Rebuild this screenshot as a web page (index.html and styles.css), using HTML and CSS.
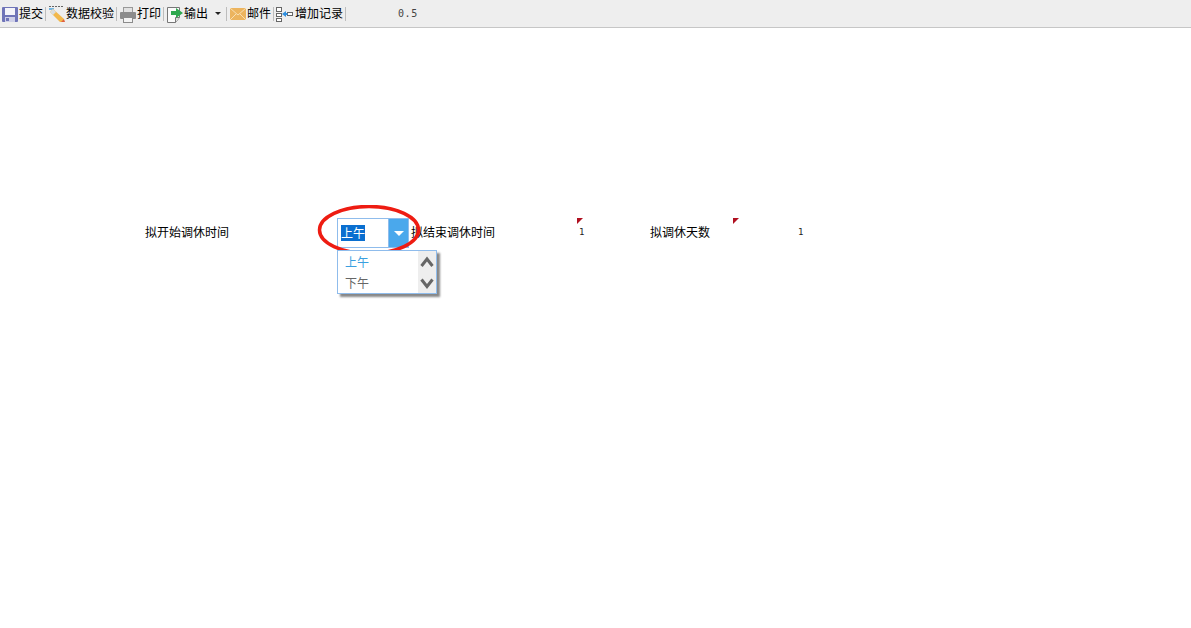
FILE: index.html
```html
<!DOCTYPE html>
<html lang="zh">
<head>
<meta charset="utf-8">
<title>调休申请</title>
<link rel="stylesheet" href="styles.css">
</head>
<body>
<div class="toolbar">
  <div class="tool">
    <svg class="icon" width="18" height="18" viewBox="0 0 18 18"><rect x="1" y="2" width="16" height="15" fill="#6f74b8" rx="1"/><rect x="4" y="3" width="10" height="7" fill="#f4f4fa"/><rect x="4" y="12" width="10" height="5" fill="#cfd0e8"/><rect x="5" y="13" width="3" height="3" fill="#6f74b8"/></svg>
    <span>提交</span>
  </div>
  <i class="sep"></i>
  <div class="tool">
    <svg class="icon" width="18" height="18" viewBox="0 0 18 18"><path d="M1 1.500h15" stroke="#666" stroke-width="1" stroke-dasharray="2 1"/><path d="M1 4h5" stroke="#4aa3df" stroke-width="1.500"/><path d="M2 7l3-3 11 10-1 3-3 0z" fill="#f2b84b"/><path d="M2 7l3-3 3 3-3 3z" fill="#d9dde0"/><path d="M13 17l3-3 1 3z" fill="#e0603f"/></svg>
    <span>数据校验</span>
  </div>
  <i class="sep"></i>
  <div class="tool">
    <svg class="icon" width="18" height="18" viewBox="0 0 18 18"><rect x="4.500" y="2.500" width="9" height="5" fill="#e2e2e2" stroke="#999"/><rect x="1" y="7" width="16" height="7" rx="1" fill="#8c8c8c"/><rect x="4.500" y="12.500" width="9" height="5" fill="#f4f4f4" stroke="#8c8c8c"/></svg>
    <span>打印</span>
  </div>
  <i class="sep"></i>
  <div class="tool">
    <svg class="icon" width="18" height="18" viewBox="0 0 18 18"><path d="M1.500 2.500h12v10l-4 5h-8z" fill="#fbfbfb" stroke="#777"/><path d="M9.500 17.500v-5h4" fill="#ddd" stroke="#777"/><path d="M5 6h5V3l7 5-7 5v-3H5z" fill="#2fa84f"/></svg>
    <span>输出</span>
    <b class="caret"></b>
  </div>
  <i class="sep"></i>
  <div class="tool">
    <svg class="icon" width="18" height="18" viewBox="0 0 18 18"><rect x="1" y="3" width="16" height="12" fill="#ecb45e"/><path d="M1 3l8 7 8-7M1 15l6-6M17 15l-6-6" fill="none" stroke="#f8dfb2" stroke-width="1"/></svg>
    <span>邮件</span>
  </div>
  <i class="sep"></i>
  <div class="tool">
    <svg class="icon" width="19" height="18" viewBox="0 0 19 18"><rect x="0.500" y="2.500" width="5" height="4" fill="#fff" stroke="#666"/><rect x="0.500" y="8.500" width="5" height="3" fill="#fff" stroke="#666"/><rect x="0.500" y="13.500" width="5" height="3" fill="#fff" stroke="#666"/><rect x="11.500" y="7.500" width="5" height="3" fill="#fff" stroke="#666"/><path d="M6 9l4-3v2h1.500v2H10v2z" fill="#2f8fe0"/></svg>
    <span>增加记录</span>
  </div>
  <i class="sep"></i>
  <div class="tool-value">0.5</div>
</div>

<div class="form-row">
  <div class="label">拟开始调休时间</div>
  <div class="select-cell">
    <div class="select">
      <div class="select-text"><span class="selected">上午</span></div>
      <div class="select-btn"><b class="select-caret"></b></div>
    </div>
    <svg class="ring" width="104" height="52" viewBox="0 0 104 52"><ellipse cx="52" cy="25" rx="49.500" ry="23.500" fill="none" stroke="#ee1c12" stroke-width="3.500"/></svg>
    <div class="dropdown">
      <div class="options">
        <div class="option active">上午</div>
        <div class="option">下午</div>
      </div>
      <div class="scrollbar">
        <svg width="18" height="21" viewBox="0 0 18 21"><path d="M3.500 15l5.500-7 5.500 7" fill="none" stroke="#666" stroke-width="3"/></svg>
        <svg width="18" height="21" viewBox="0 0 18 21"><path d="M3.500 7.500l5.500 7 5.500-7" fill="none" stroke="#666" stroke-width="3"/></svg>
      </div>
    </div>
  </div>
  <div class="label label-mid">拟结束调休时间</div>
  <div class="value marked value-first">1</div>
  <div class="label label-last">拟调休天数</div>
  <div class="value marked value-last">1</div>
</div>
</body>
</html>
```
FILE: styles.css
```css
* { box-sizing: border-box; }
html, body { margin: 0; padding: 0; background: #fff; }
body {
  font-family: "Noto Sans CJK SC", "Liberation Sans", sans-serif;
  font-size: 12px;
  color: #000;
  height: 628px;
  overflow: hidden;
}
.toolbar {
  display: flex;
  align-items: center;
  height: 28px;
  background: #eeeeee;
  border-bottom: 1px solid #c6c6c6;
  padding-left: 1px;
}
.tool {
  display: flex;
  align-items: center;
  height: 18px;
  line-height: 16px;
}
.tool span { padding-bottom: 2px; }
.icon { display: block; flex: none; }
.sep {
  width: 1px;
  height: 14px;
  background: #bdbdbd;
  margin: 0 2px;
}
.caret {
  width: 0;
  height: 0;
  border: 3px solid transparent;
  border-top: 3px solid #222;
  border-bottom: 0;
  margin-left: 7px;
  margin-right: 3px;
}
.tool-value {
  margin-left: 50px;
  font-family: "DejaVu Sans Mono", monospace;
  font-size: 10px;
  letter-spacing: 0.500px;
  color: #444;
}
.form-row {
  display: grid;
  grid-template-columns: 192px 73px 167px 74px 82px 68px;
  height: 30px;
  margin: 190px 0 0 145px;
  align-items: center;
}
.label { line-height: 18px; white-space: nowrap; padding-bottom: 2px; }
.label-mid { padding-left: 1px; }
.label-last { margin-left: -1px; }
.select-cell { position: relative; height: 30px; }
.select {
  display: flex;
  width: 72px;
  height: 30px;
  border: 1px solid #8fbcec;
  background: #fff;
}
.select-text {
  flex: 1;
  padding-left: 3px;
  line-height: 27px;
}
.selected {
  background: #0a6fd0;
  color: #fff;
  display: inline-block;
  line-height: 16px;
}
.select-btn {
  width: 20px;
  background: #4aa8ec;
  border-left: 1px solid #8fbcec;
  display: flex;
  align-items: center;
  justify-content: center;
}
.select-caret {
  width: 0;
  height: 0;
  border-left: 5px solid transparent;
  border-right: 5px solid transparent;
  border-top: 5px solid #fff;
}
.ring {
  position: absolute;
  left: -20px;
  top: -13px;
  pointer-events: none;
}
.dropdown {
  position: absolute;
  left: 0;
  top: 32px;
  width: 100px;
  height: 44px;
  border: 1px solid #8fbcec;
  background: #fff;
  display: flex;
  box-shadow: 3px 3px 2px #888;
}
.options { flex: 1; }
.option {
  height: 21px;
  line-height: 21px;
  padding-left: 7px;
  color: #666;
  font-size: 12px;
}
.option.active { color: #3a9fe0; }
.scrollbar {
  width: 18px;
  background: #eeeeee;
  display: flex;
  flex-direction: column;
  align-items: center;
}
.scrollbar svg { display: block; flex: none; }
.value {
  position: relative;
  height: 30px;
  line-height: 28px;
  font-family: "DejaVu Sans Mono", monospace;
  font-size: 9px;
  color: #222;
}
.marked::before {
  content: "";
  position: absolute;
  left: 0;
  top: 0;
  width: 0;
  height: 0;
  border-top: 6px solid #b01020;
  border-right: 6px solid transparent;
}
.value-first { padding-left: 2px; }
.value-last { padding-left: 65px; }
```
